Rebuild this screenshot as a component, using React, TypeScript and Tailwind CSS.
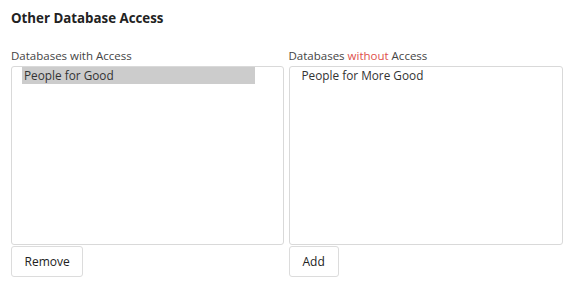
export default function App() {
  return (
    <div className="w-[574px] h-[293px] bg-white text-[#333] font-['Open_Sans',sans-serif]">
      <div className="px-[11px] pt-[8px]">
        <h2 className="text-[13.3px] font-bold text-[#222] h-[20px] leading-[20px]">Other Database Access</h2>
        <div className="flex gap-[5px] mt-[20px]">
          <div className="w-[274px] flex flex-col">
            <label className="text-[11.5px] leading-[16px] h-[16px] text-[#444]">Databases with Access</label>
            <div className="mt-[2px] h-[179px] border border-[#d9d9d9] rounded-[3px] pl-[10px] pr-[28px]">
              <div className="bg-[#cccccc] text-[11.8px] leading-[17px] pl-[2px] text-[#333]">People for Good</div>
            </div>
            <div>
              <button className="mt-[1px] h-[31px] px-[12.5px] border border-[#dcdcdc] rounded-[3px] text-[12px] text-[#222] bg-white">Remove</button>
            </div>
          </div>
          <div className="w-[276px] flex flex-col">
            <label className="text-[11.5px] leading-[16px] h-[16px] text-[#444]">
              Databases <span className="text-[#e0504c]">without</span> Access
            </label>
            <div className="mt-[2px] h-[179px] border border-[#d9d9d9] rounded-[3px] pl-[12px]">
              <div className="text-[11.8px] leading-[17px] text-[#333]">People for More Good</div>
            </div>
            <div>
              <button className="mt-[1px] h-[31px] px-[13px] border border-[#dcdcdc] rounded-[3px] text-[12px] text-[#222] bg-white">Add</button>
            </div>
          </div>
        </div>
      </div>
    </div>
  )
}
